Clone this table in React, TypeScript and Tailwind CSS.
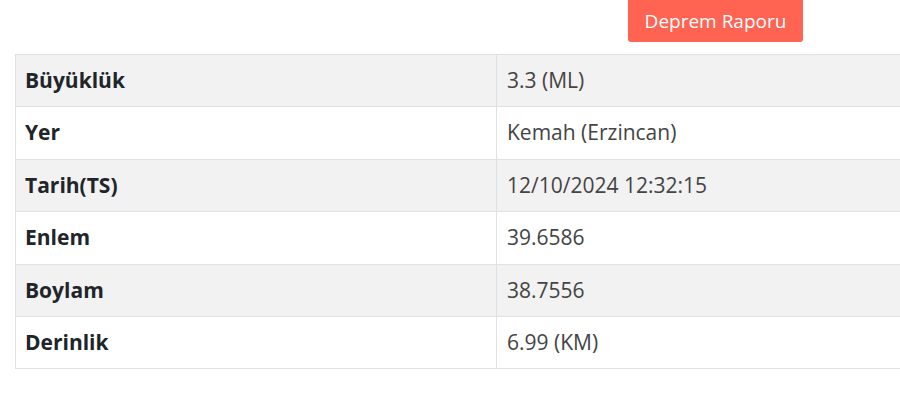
import React from "react";

const rows: [string, string][] = [
  ["Büyüklük", "3.3 (ML)"],
  ["Yer", "Kemah (Erzincan)"],
  ["Tarih(TS)", "12/10/2024 12:32:15"],
  ["Enlem", "39.6586"],
  ["Boylam", "38.7556"],
  ["Derinlik", "6.99 (KM)"],
];

export default function App() {
  return (
    <div
      className="w-[900px] h-[401px] overflow-hidden bg-white text-[#212529]"
      style={{ fontFamily: '"Open Sans", "Noto Sans", sans-serif' }}
    >
      <div className="flex pl-[628px]">
        <button className="h-[42px] w-[175px] rounded-b-[3px] bg-[#ff6352] text-[19px] text-white">
          Deprem Raporu
        </button>
      </div>
      <div className="pl-[15px] pt-[12px]">
        <table className="w-[1000px] border-collapse text-[21px]">
          <tbody>
            {rows.map(([k, v], i) => (
              <tr key={k} className={i % 2 === 0 ? "bg-[#f2f2f2]" : "bg-white"}>
                <td className="h-[52.4px] w-[481px] border border-[#dee2e6] px-[9px] font-bold text-[#212529]">
                  {k}
                </td>
                <td className="h-[52.4px] border border-[#dee2e6] px-[10px] text-[#444]">{v}</td>
              </tr>
            ))}
          </tbody>
        </table>
        <p className="mt-[25px] pl-[10px] text-[21px] leading-[30px] text-[#333]">
          Bu depremin kaydı haritada belirtilmiştir.
        </p>
      </div>
    </div>
  );
}
